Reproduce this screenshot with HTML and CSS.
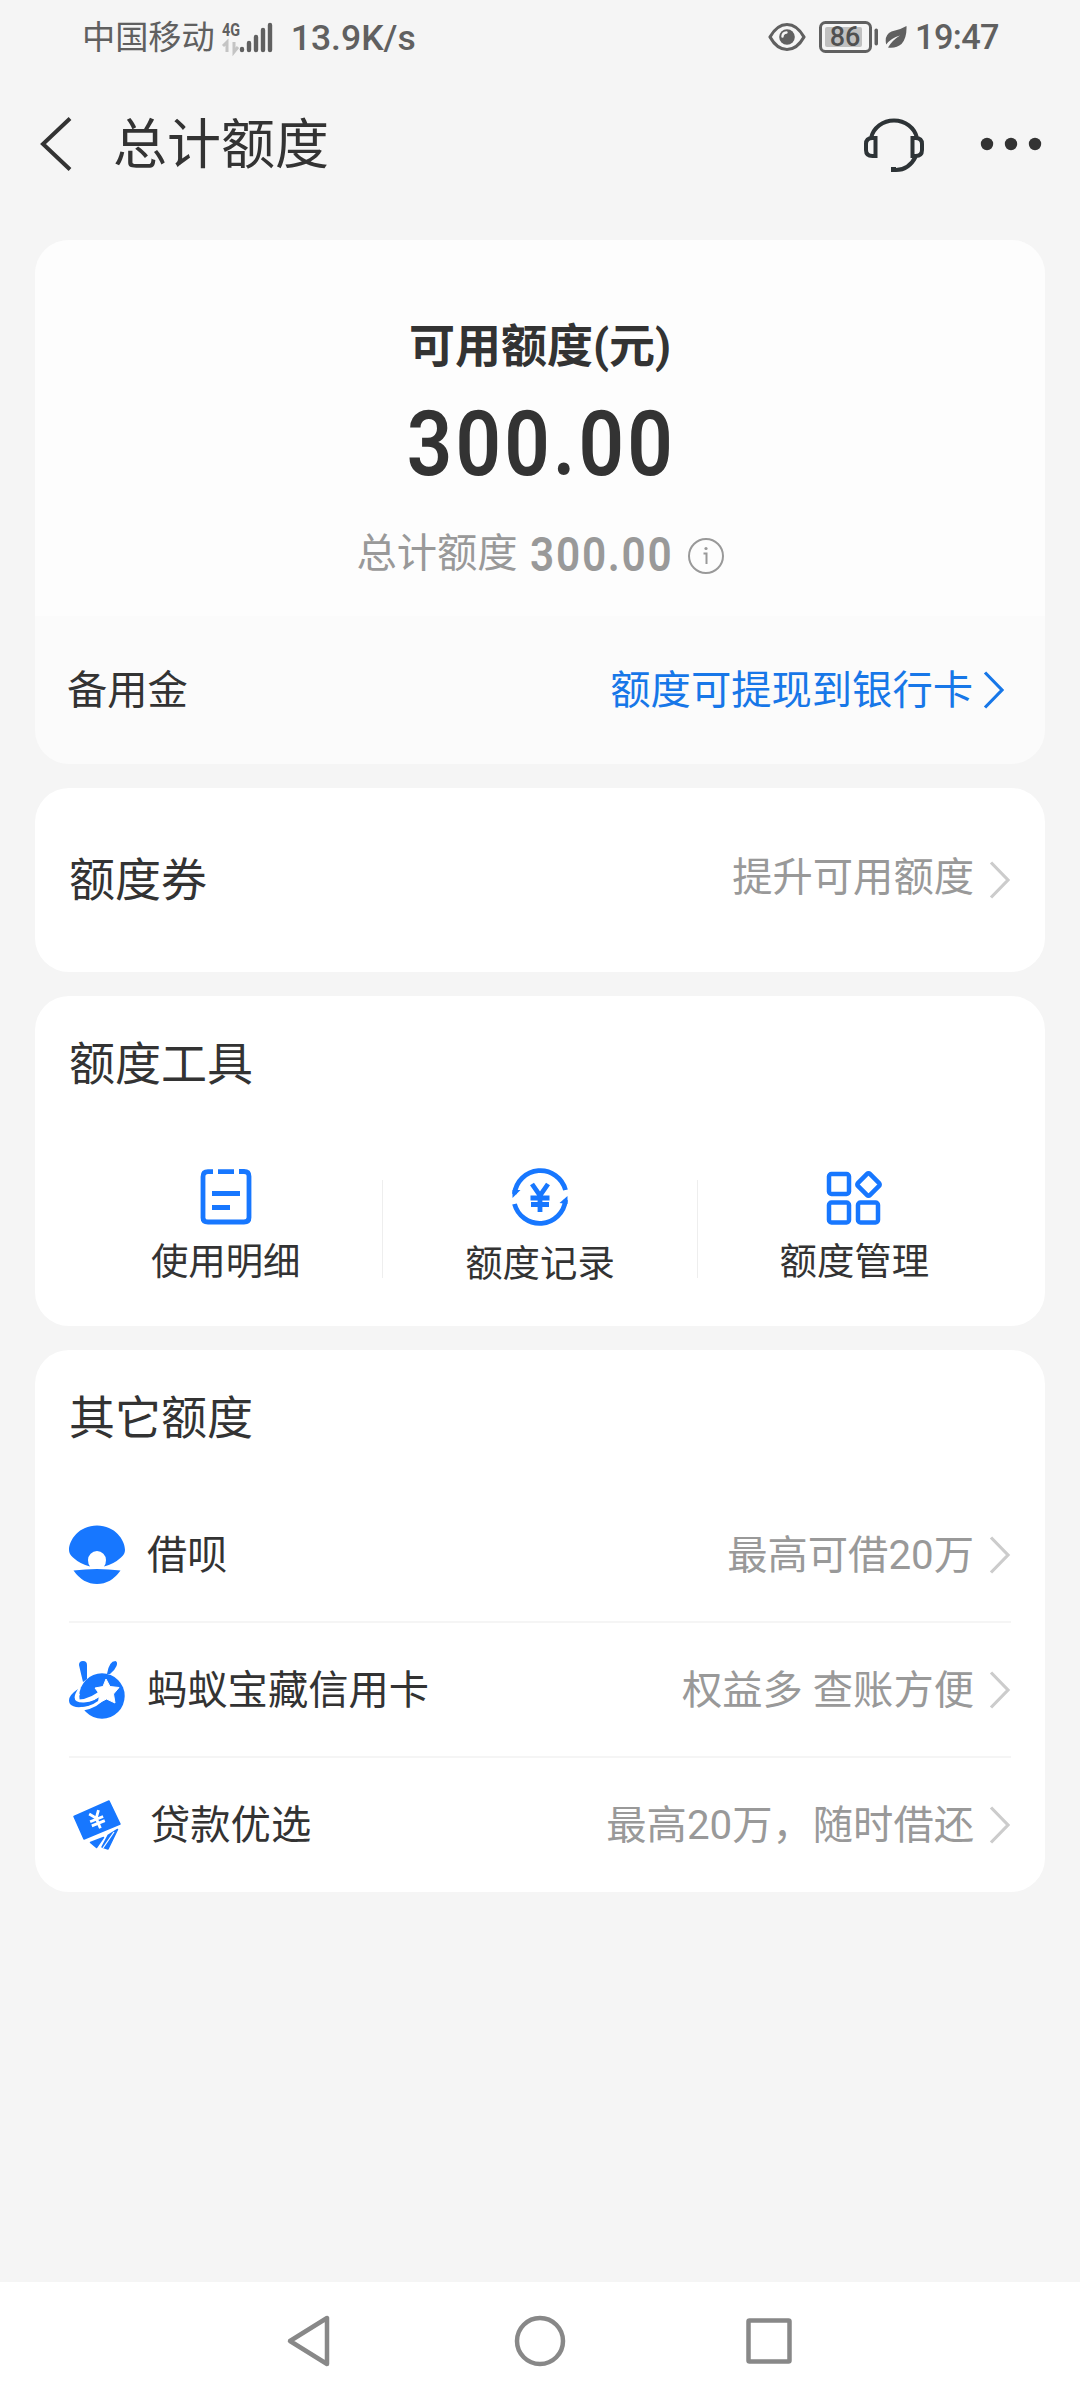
FILE: index.html
```html
<!DOCTYPE html>
<html lang="zh-CN">
<head>
<meta charset="utf-8">
<title>总计额度</title>
<link rel="stylesheet" href="styles.css">
</head>
<body>
<div class="screen">
  <div class="status">
    <span class="carrier">中国移动</span>
    <svg class="signal" width="54" height="36" viewBox="0 0 54 36">
      <text class="net" x="1" y="18" textLength="18" lengthAdjust="spacingAndGlyphs">4G</text>
      <path d="M2 28l4-4v10M13 24v10l4-5" fill="none" stroke="#c4c4c4" stroke-width="3"/>
      <g stroke="#606060" stroke-width="4.400" stroke-linecap="round"><path d="M21 31v1M28 25v7M35 19v13M42 12v20M49 7v25"/></g>
    </svg>
    <span class="speed">13.9K/s</span>
    <span class="spacer"></span>
    <svg class="eye" width="38" height="30" viewBox="0 0 38 30">
      <path d="M2 15Q9 2.500 19 2.500T36 15Q29 27.500 19 27.500T2 15z" fill="none" stroke="#606060" stroke-width="3.200" stroke-linejoin="round"/>
      <circle cx="19" cy="15" r="7.800" fill="#606060"/><path d="M14.500 14.500q0-3.500 4-4" fill="none" stroke="#f5f5f5" stroke-width="2.400" stroke-linecap="round"/>
    </svg>
    <svg class="battery" width="60" height="32" viewBox="0 0 60 32">
      <rect x="1.500" y="1.500" width="50" height="29" rx="5" fill="none" stroke="#606060" stroke-width="3"/>
      <rect x="6" y="6" width="37" height="20" rx="2" fill="#c0c0c0"/>
      <rect x="55.500" y="7.500" width="3.500" height="17" rx="1.700" fill="#606060"/>
      <text class="level" x="26" y="25" text-anchor="middle">86</text>
    </svg>
    <svg class="leaf" width="22" height="22" viewBox="0 0 22 22">
      <path d="M21.500 0Q22 12 16.500 18 11.500 22.500 3 21.500 7.500 14 15 9.500 6 12 1.200 18.500-1 9 6.500 5.500 15 4 21.500 0z" fill="#606060"/>
    </svg>
    <span class="clock">19:47</span>
  </div>

  <header class="bar">
    <svg class="back" width="34" height="54" viewBox="0 0 34 54"><path d="M31 1.500L4 27l27 25.500" fill="none" stroke="#333" stroke-width="4"/></svg>
    <h1 class="bar-title">总计额度</h1>
    <svg class="headset" width="62" height="60" viewBox="0 0 62 60" fill="none" stroke="#2d3336" stroke-width="4">
      <path d="M8 24a23.500 22 0 0 1 46 0M12.500 24v18H9.500Q3 42 3 36v-6q0-6 6.500-6zM49.500 24v18h3Q59 42 59 36v-6q0-6-6.500-6zM53 42Q46 56 33 56H28" />
      <rect x="28" y="53" width="5" height="5" fill="#2d3336" stroke="none"/>
    </svg>
    <svg class="more" width="62" height="14" viewBox="0 0 62 14" fill="#333"><circle cx="7" cy="7" r="6.200"/><circle cx="31" cy="7" r="6.200"/><circle cx="55" cy="7" r="6.200"/></svg>
  </header>

  <main class="cards">
    <section class="card quota">
      <div class="quota-main">
        <div class="quota-label">可用额度(元)</div>
        <div class="quota-amount">300.00</div>
        <div class="quota-total">
          <span class="total-name">总计额度</span><span class="total-box"><b class="total-num">300.00</b></span>
          <svg width="36" height="36" viewBox="0 0 36 36" fill="none" stroke="#999"><circle cx="18" cy="18" r="17" stroke-width="2"/><path d="M15.500 15.500h3V26" stroke-width="2"/><circle cx="18" cy="10.500" r="1.600" fill="#999" stroke="none"/></svg>
        </div>
      </div>
      <div class="quota-row">
        <span class="label">备用金</span>
        <span class="link"><span class="label">额度可提现到银行卡</span><svg class="arrow" width="22" height="38" viewBox="0 0 22 38"><path d="M2 1.500L19 19 2 36.500"/></svg></span>
      </div>
    </section>

    <section class="card coupon">
      <span class="heading">额度券</span>
      <span class="hint"><span class="hint-text">提升可用额度</span><svg class="arrow" width="22" height="38" viewBox="0 0 22 38"><path d="M2 1.500L19 19 2 36.500"/></svg></span>
    </section>

    <section class="card tools">
      <h2 class="heading">额度工具</h2>
      <div class="tool-grid">
        <div class="tool">
          <svg width="60" height="60" viewBox="0 0 60 60" fill="none" stroke="#1777ff" stroke-width="4.800">
            <path d="M17 4.700h-5Q7 4.700 7 9.700v41Q7 55 12 55h36q5 0 5-4.500v-41q0-5-5-5h-5M22 4.700h16M16 26.500h28M16 40.500h18"/>
          </svg>
          <span>使用明细</span>
        </div>
        <i class="tool-line"></i>
        <div class="tool mid">
          <svg width="60" height="60" viewBox="0 0 60 60" fill="none" stroke="#1777ff" stroke-width="4.800">
            <path d="M4.500 27a26 26 0 0 1 51-4M55.500 33a26 26 0 0 1-51 4"/>
            <path d="M2.500 23v8l8-8zM57.500 37v-8l-8 7z" fill="#1777ff" stroke="none"/>
            <path d="M22 17l8 11.500L38 17M20.500 31h19M21 37.500h18M30 29v16"/>
          </svg>
          <span>额度记录</span>
        </div>
        <i class="tool-line"></i>
        <div class="tool">
          <svg width="60" height="60" viewBox="0 0 60 60" fill="none" stroke="#1777ff" stroke-width="4.500">
            <rect x="5" y="7" width="20" height="20" rx="2.500"/><rect x="5" y="35.500" width="20" height="20" rx="2.500"/><rect x="34" y="35.500" width="20" height="20" rx="2.500"/>
            <rect x="-8.500" y="-8.500" width="17" height="17" rx="2" transform="translate(44.500 17.500) rotate(45)"/>
          </svg>
          <span>额度管理</span>
        </div>
      </div>
    </section>

    <section class="card others">
      <h2 class="heading">其它额度</h2>
      <div class="rows">
      <div class="row">
        <svg class="logo" width="56" height="60" viewBox="0 0 56 60" fill="#1777ff">
          <path d="M28 .5C46 .5 56 15 56 25q0 4-4 7.500-7 6.500-17 9Q37 39 37 35a9 9 0 0 0-18 0q0 4 2 6.500-10-2.500-17-9Q0 29 0 25C0 15 10 .5 28 .5zM4.500 45.500q23.500-3 47 0Q42 59 28 59T4.500 45.500z"/>
        </svg>
        <span class="label">借呗</span>
        <span class="hint"><span class="label">最高可借20万</span><svg class="arrow" width="22" height="38" viewBox="0 0 22 38"><path d="M2 1.500L19 19 2 36.500"/></svg></span>
      </div>
      <div class="row">
        <svg class="logo" width="56" height="60" viewBox="0 0 56 60">
          <circle cx="33" cy="36" r="22.700" fill="#1777ff"/>
          <path d="M10 5q0-4 4-4t4 4v14l-4 3Q12 14 10 5zM38 14Q40 1 46.500 1 49 2 47.500 6T41 14z" fill="#1777ff"/>
          <path d="M9 33Q2 42 10 42 24 41 34 31" fill="none" stroke="#fff" stroke-width="5"/>
          <path d="M12 49q16-2 24-14" fill="none" stroke="#fff" stroke-width="4"/>
          <path d="M9 29Q-3 37 1 44q4 5 18 2 11-3 17-13-10 9-21 9.500Q0 43 9 29z" fill="#1777ff"/>
          <path d="M37 19l4 7.500 9 1-5.500 6.500 1.500 9-8.500-4-8 4L30.500 34 26 28l8-1.500z" fill="#fff" stroke="#fff" stroke-linejoin="round"/>
        </svg>
        <span class="label">蚂蚁宝藏信用卡</span>
        <span class="hint"><span class="label">权益多 查账方便</span><svg class="arrow" width="22" height="38" viewBox="0 0 22 38"><path d="M2 1.500L19 19 2 36.500"/></svg></span>
      </div>
      <div class="row">
        <svg class="logo wide" width="56" height="60" viewBox="0 0 56 60">
          <g fill="#1777ff" stroke="#1777ff" stroke-width="1.500" stroke-linejoin="round"><path d="M5 21.500L40 6l11 23-36 15z"/><path d="M21.500 47.500l13-5-7 10zM33 52L39 40.500l9.500-6-9.500 19.500z"/></g>
          <path d="M45 37L34 53" stroke="#fff" stroke-width="1.300"/>
          <g transform="translate(28 25) rotate(-22)" fill="none" stroke="#fff" stroke-width="2.800"><path d="M-5-8.500L0-2l5-6.500M-7-1H7M-7 3.500H7M0-2V9"/></g>
        </svg>
        <span class="label">贷款优选</span>
        <span class="hint"><span class="label">最高20万，随时借还</span><svg class="arrow" width="22" height="38" viewBox="0 0 22 38"><path d="M2 1.500L19 19 2 36.500"/></svg></span>
      </div>
      </div>
    </section>
  </main>

  <nav class="nav">
    <svg width="50" height="54" viewBox="0 0 50 54"><path d="M4 27L41 4v46z"/></svg>
    <svg width="54" height="54" viewBox="0 0 54 54"><circle cx="27" cy="27" r="23"/></svg>
    <svg width="50" height="54" viewBox="0 0 50 54"><rect x="4.500" y="6.500" width="41" height="41" rx="1"/></svg>
  </nav>
</div>
</body>
</html>
```

FILE: styles.css
```css
* { box-sizing: border-box; }
body { margin: 0; background: #f5f5f5; color: #333; font-family: Roboto, "Noto Sans CJK SC", sans-serif; font-size: 40.3px; }
svg { display: block; flex: none; }
h1, h2 { margin: 0; font-weight: 400; }
.screen { width: 1080px; height: 2400px; display: flex; flex-direction: column; }

.status { height: 72px; display: flex; align-items: center; padding: 2px 81px 0 82px; color: #606060; }
.carrier { font-size: 33.2px; line-height: 70px; padding-top: 1px; }
.signal { margin: 0 16px 2px 6px; overflow: visible; }
.net { font: 700 19px Roboto, sans-serif; fill: #606060; }
.speed { font-size: 35.5px; font-weight: 500; padding-top: 2px; }
.spacer { flex: 1; }
.eye { margin-right: 13px; }
.level { font: 500 27px Roboto, sans-serif; fill: #505050; }
.leaf { margin: 0 8px 0 6px; }
.clock { font-size: 34.3px; font-weight: 500; letter-spacing: -.6px; }

.bar { height: 168px; display: flex; align-items: center; padding: 0 38px 24px 39px; }
.bar-title { font-size: 54px; line-height: 80px; margin-left: 40px; padding-top: 3px; flex: 1; }
.headset { margin-right: 55px; margin-bottom: 1px; }

.cards { flex: 1; display: flex; flex-direction: column; gap: 24px; padding: 0 35px; }
.card { background: #fff; border-radius: 34px; overflow: hidden; }
.heading { font-size: 46px; line-height: 68px; }
.label { padding-bottom: 4px; }

.quota { height: 524px; background: #fbfbfb; }
.quota-main { height: 376px; background: #fdfdfd; display: flex; flex-direction: column; align-items: center; padding-top: 72px; }
.quota-label { font-size: 46px; font-weight: 700; line-height: 68px; }
.quota-amount { font-size: 91px; font-weight: 600; line-height: 120px; letter-spacing: 3.5px; transform: scaleX(.877); margin: 4px 0 0 3px; }
.quota-total { display: flex; align-items: center; color: #999; line-height: 60px; margin-top: 19px; }
.total-name { padding-bottom: 4px; }
.total-box { width: 143px; margin: 0 15px 0 12px; padding-top: 2px; }
.total-num { display: inline-block; font-size: 49px; font-weight: 600; letter-spacing: 2px; transform: scaleX(.865); transform-origin: left; }
.quota-row { height: 148px; display: flex; align-items: center; justify-content: space-between; padding: 0 40px 0 32px; }
.quota-row .label { padding-bottom: 7px; }
.link { display: flex; align-items: center; color: #1777e8; }
.arrow { fill: none; stroke: #ccc; stroke-width: 3.2; margin-left: 15px; }
.link .arrow { stroke: #1777e8; margin-left: 10px; }

.coupon { height: 184px; display: flex; align-items: center; justify-content: space-between; padding: 0 34px; }
.hint { display: flex; align-items: center; color: #999; }
.coupon .hint { height: 60px; }
.hint-text { padding-bottom: 10px; margin-top: -4px; }

.tools { height: 330px; padding: 34px 34px 0; }
.tool-grid { display: grid; grid-template-columns: 1fr 1px 1fr 1px 1fr; margin-top: 69px; }
.tool { display: flex; flex-direction: column; align-items: center; font-size: 37.4px; line-height: 56px; gap: 7px; }
.tool.mid { gap: 9px; }
.tool-line { background: #eee; margin-top: 13px; height: 98px; }

.others { height: 542px; padding: 34px 34px 0; }
.rows { padding-top: 36px; }
.row { height: 135px; display: flex; align-items: center; border-bottom: 2px solid #f5f5f5; }
.row:last-child { border: 0; height: 133px; }
.row .hint { margin-left: auto; }
.row .label { padding-bottom: 6px; }
.logo { margin-right: 22px; }
.logo.wide { margin-right: 25px; }

.nav { height: 118px; background: #fff; display: flex; align-items: center; justify-content: center; gap: 177px; }
.nav svg { fill: none; stroke: #888; stroke-width: 4.5; stroke-linejoin: round; }
```
